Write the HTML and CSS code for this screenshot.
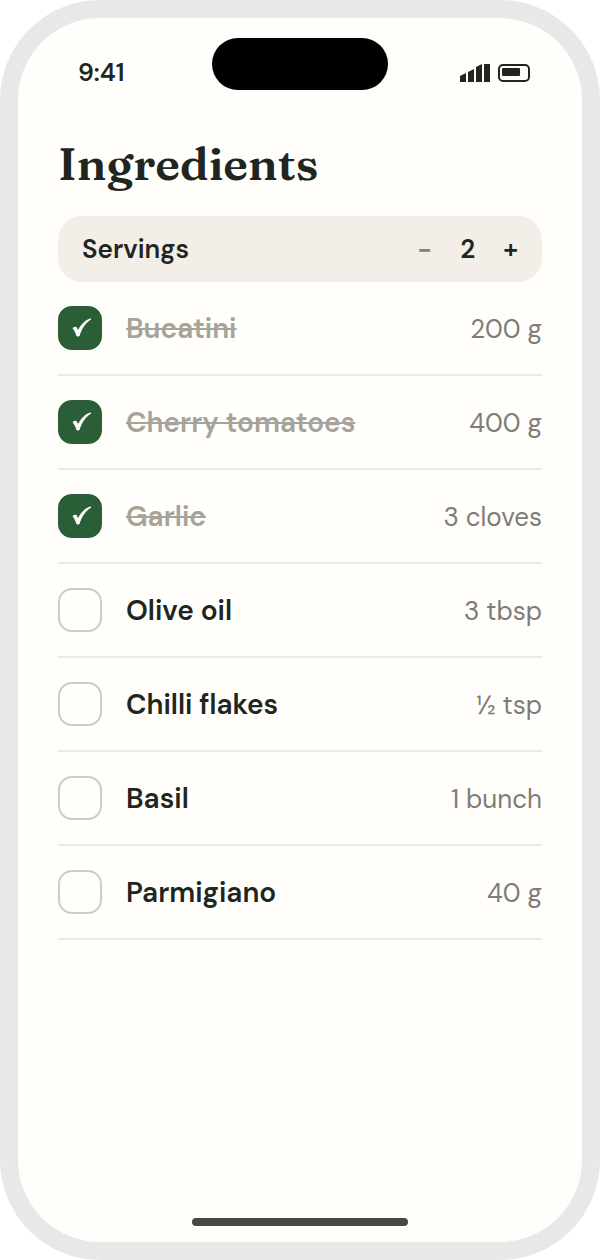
FILE: index.html
```html
<!DOCTYPE html>
<html lang="en">
<head>
  <meta charset="UTF-8">
  <meta name="viewport" content="width=device-width, initial-scale=1">
  <title>Ingredients</title>
  <link rel="stylesheet" href="styles.css">
</head>
<body>

  <div class="phone">
    <header class="status-bar">
      <span class="time">9:41</span>
      <div class="island"></div>
      <div class="status-icons">
        <svg width="30" height="18" viewBox="0 0 30 18" fill="currentColor">
          <path d="M0 12l6-3v9H0zM8 8l6-3v13H8zM16 3l6-3v18h-6zM24 0h6v18h-6z"/>
        </svg>
        <svg width="32" height="18" viewBox="0 0 32 18" fill="none">
          <rect x="1" y="1" width="30" height="16" rx="4" stroke="currentColor" stroke-width="2"/>
          <rect x="4" y="4" width="18" height="8" rx="1" fill="currentColor"/>
        </svg>
      </div>
    </header>

    <main>
      <h1>Ingredients</h1>

      <div class="servings">
        <span>Servings</span>
        <div class="stepper">
          <button type="button" class="minus" aria-label="Fewer servings">−</button>
          <span class="count">2</span>
          <button type="button" class="plus" aria-label="More servings">+</button>
        </div>
      </div>

      <ul class="ingredients">
        <li>
          <label>
            <span class="check">
              <input type="checkbox" checked>
              <svg viewBox="0 0 44 44"><path d="M15 22L18 21L20 25C23 19 27 14 33 13C27 17 23 23 21 30L19 30C18 27 17 25 15 22Z"/></svg>
            </span>
            <span class="name">Bucatini</span>
          </label>
          <span class="amount">200 g</span>
        </li>
        <li>
          <label>
            <span class="check">
              <input type="checkbox" checked>
              <svg viewBox="0 0 44 44"><path d="M15 22L18 21L20 25C23 19 27 14 33 13C27 17 23 23 21 30L19 30C18 27 17 25 15 22Z"/></svg>
            </span>
            <span class="name">Cherry tomatoes</span>
          </label>
          <span class="amount">400 g</span>
        </li>
        <li>
          <label>
            <span class="check">
              <input type="checkbox" checked>
              <svg viewBox="0 0 44 44"><path d="M15 22L18 21L20 25C23 19 27 14 33 13C27 17 23 23 21 30L19 30C18 27 17 25 15 22Z"/></svg>
            </span>
            <span class="name">Garlic</span>
          </label>
          <span class="amount">3 cloves</span>
        </li>
        <li>
          <label>
            <span class="check"><input type="checkbox"></span>
            <span class="name">Olive oil</span>
          </label>
          <span class="amount">3 tbsp</span>
        </li>
        <li>
          <label>
            <span class="check"><input type="checkbox"></span>
            <span class="name">Chilli flakes</span>
          </label>
          <span class="amount">½ tsp</span>
        </li>
        <li>
          <label>
            <span class="check"><input type="checkbox"></span>
            <span class="name">Basil</span>
          </label>
          <span class="amount">1 bunch</span>
        </li>
        <li>
          <label>
            <span class="check"><input type="checkbox"></span>
            <span class="name">Parmigiano</span>
          </label>
          <span class="amount">40 g</span>
        </li>
      </ul>
    </main>

    <div class="home-bar"></div>
  </div>

</body>
</html>
```
FILE: styles.css
```css
* {
  margin: 0;
  padding: 0;
  box-sizing: border-box;
}

body {
  background: #fff;
  color: #20261f;
  font-family: "DM Sans", Lato, "Liberation Sans", sans-serif;
}

.phone {
  display: flex;
  flex-direction: column;
  min-height: 100vh;
  padding-bottom: 16px;
  border: 18px solid #e8e8e8;
  border-radius: 100px;
  background: #fffefa;
}

/* status bar */
.status-bar {
  display: grid;
  grid-template-columns: 1fr 176px 1fr;
  align-items: center;
  padding: 20px 52px 0;
}

.time {
  font-size: 25px;
  line-height: 34px;
  font-weight: 600;
  padding: 18px 0 0 8px;
}

.island {
  height: 52px;
  border-radius: 26px;
  background: #000;
}

.status-icons {
  display: flex;
  justify-content: flex-end;
  gap: 8px;
  padding-top: 18px;
}

main {
  flex: 1;
  padding: 44px 40px 0;
}

h1 {
  font-family: Fraunces, "Liberation Serif", serif;
  font-size: 46px;
  line-height: 60px;
  font-weight: 600;
  margin-bottom: 22px;
}

/* servings */
.servings {
  display: flex;
  justify-content: space-between;
  align-items: center;
  padding: 16px 24px;
  border-radius: 24px;
  background: #f3eee8;
  font-size: 26px;
  line-height: 34px;
  font-weight: 600;
}

.stepper {
  display: flex;
  align-items: center;
  gap: 28px;
}

.stepper button {
  border: 0;
  background: none;
  color: inherit;
  font: inherit;
  cursor: pointer;
}

.stepper .minus {
  color: #85827c;
}

/* list */
.ingredients {
  list-style: none;
}

.ingredients li {
  display: flex;
  justify-content: space-between;
  align-items: center;
  padding: 24px 0;
  border-bottom: 2px solid #ecebe0;
}

.ingredients label {
  display: flex;
  align-items: center;
  gap: 24px;
  cursor: pointer;
}

.check {
  display: grid;
  width: 44px;
  height: 44px;
}

.check input,
.check svg {
  grid-area: 1 / 1;
  width: 44px;
  height: 44px;
}

.check input {
  appearance: none;
  border: 2px solid #cfcdc2;
  border-radius: 14px;
  cursor: pointer;
}

.check input:checked {
  border-color: #2a5e37;
  background: #2a5e37;
}

.check svg {
  fill: #fff;
  stroke: #fff;
  pointer-events: none;
}

.name,
.amount {
  padding-top: 2px;
  line-height: 36px;
}

.name {
  font-size: 28px;
  font-weight: 600;
}

.check:has(:checked) + .name {
  color: #a5a39a;
  text-decoration: line-through;
  text-decoration-thickness: 2px;
}

.amount {
  color: #7f7c77;
  font-size: 26px;
}

.home-bar {
  align-self: center;
  width: 216px;
  height: 8px;
  border-radius: 4px;
  background: #454943;
}
```
